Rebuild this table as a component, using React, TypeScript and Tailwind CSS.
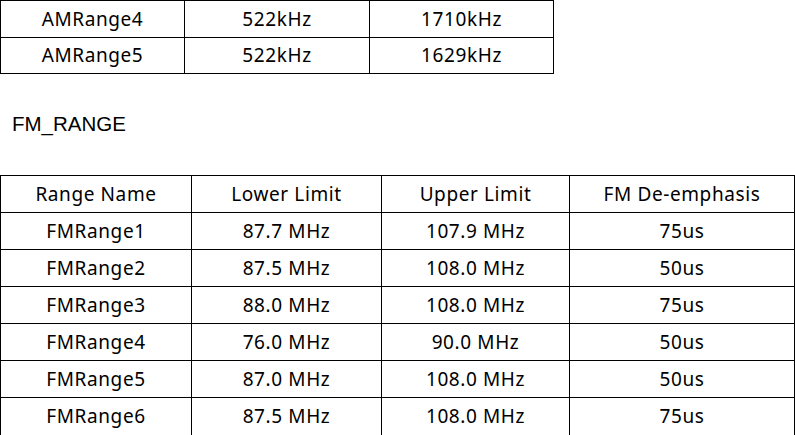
import React from "react";

const amRows = [
  ["AMRange4", "522kHz", "1710kHz"],
  ["AMRange5", "522kHz", "1629kHz"],
];

const fmRows = [
  ["Range Name", "Lower Limit", "Upper Limit", "FM De-emphasis"],
  ["FMRange1", "87.7 MHz", "107.9 MHz", "75us"],
  ["FMRange2", "87.5 MHz", "108.0 MHz", "50us"],
  ["FMRange3", "88.0 MHz", "108.0 MHz", "75us"],
  ["FMRange4", "76.0 MHz", "90.0 MHz", "50us"],
  ["FMRange5", "87.0 MHz", "108.0 MHz", "50us"],
  ["FMRange6", "87.5 MHz", "108.0 MHz", "75us"],
];

const amW = ["w-[184px]", "w-[185px]", "w-[184px]"];
const fmW = ["w-[191px]", "w-[190px]", "w-[188px]", "w-[225px]"];

export default function App() {
  return (
    <div
      className="w-[795px] h-[435px] overflow-hidden bg-white text-black"
      style={{ fontFamily: '"Noto Sans", "Noto Sans CJK KR", sans-serif' }}
    >
      <div className="flex flex-col w-[554px] border-l border-t border-black">
        {amRows.map((r, i) => (
          <div
            key={i}
            className={`flex border-b border-black ${i === 0 ? "h-[37px]" : "h-[36px]"}`}
          >
            {r.map((c, j) => (
              <div
                key={j}
                className={`${amW[j]} shrink-0 border-r border-black flex items-center justify-center text-[19px] tracking-[0.6px]`}
              >
                {c}
              </div>
            ))}
          </div>
        ))}
      </div>
      <div
        className="mt-[40px] ml-[12px] h-[20px] leading-[20px] text-[20.5px]"
        style={{ fontFamily: '"Liberation Sans", Arial, sans-serif' }}
      >
        FM_RANGE
      </div>
      <div className="mt-[41px] flex flex-col w-[795px] border-l border-t border-black">
        {fmRows.map((r, i) => (
          <div
            key={i}
            className={`flex border-b border-black shrink-0 ${i === fmRows.length - 1 ? "h-[40px]" : "h-[37px]"}`}
          >
            {r.map((c, j) => (
              <div
                key={j}
                className={`${fmW[j]} shrink-0 border-r border-black flex items-center justify-center text-[19px] tracking-[0.6px] ${i === fmRows.length - 1 ? "pb-[3px]" : ""}`}
              >
                {c}
              </div>
            ))}
          </div>
        ))}
      </div>
    </div>
  );
}
